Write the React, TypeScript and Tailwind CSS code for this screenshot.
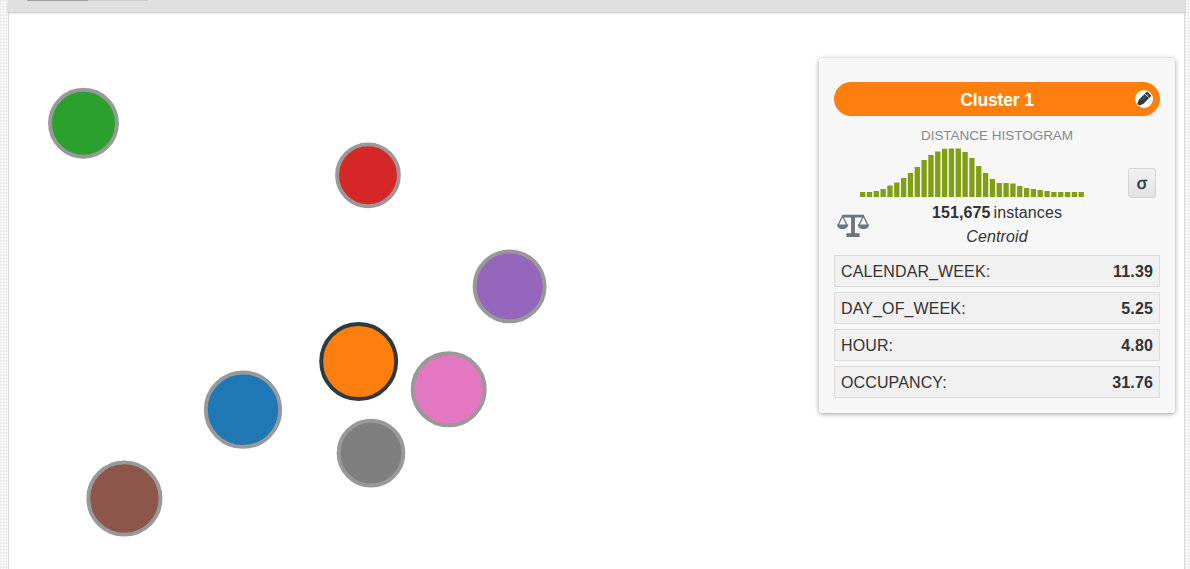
const clusters = [
  { cx: 83.5, cy: 123.3, r: 33.5, fill: "#2ca02c", stroke: "#999999" },
  { cx: 368, cy: 175.3, r: 30.9, fill: "#d62728", stroke: "#999999" },
  { cx: 509.6, cy: 286.4, r: 35, fill: "#9467bd", stroke: "#999999" },
  { cx: 358.7, cy: 361.5, r: 37.5, fill: "#ff7f0e", stroke: "#2c3a42" },
  { cx: 448.7, cy: 389.3, r: 36.1, fill: "#e377c2", stroke: "#999999" },
  { cx: 243, cy: 409.7, r: 37.2, fill: "#1f77b4", stroke: "#999999" },
  { cx: 371, cy: 453.1, r: 32.4, fill: "#7f7f7f", stroke: "#999999" },
  { cx: 124.4, cy: 498.5, r: 36.1, fill: "#8c564b", stroke: "#999999" },
];

const bars = [
  5, 5, 6, 8, 11.5, 14.5, 19, 24, 30, 37, 42, 45.5, 48.3, 48.5, 48.5, 45, 39, 31, 24, 18, 14, 14,
  13.5, 11, 9, 8, 7, 6, 5, 5, 5, 5, 5,
];

const fields = [
  ["CALENDAR_WEEK:", "11.39"],
  ["DAY_OF_WEEK:", "5.25"],
  ["HOUR:", "4.80"],
  ["OCCUPANCY:", "31.76"],
];

function ClusterMap() {
  return (
    <svg className="block h-[569px] w-[810px] shrink-0" viewBox="9 0 810 569">
      {clusters.map((c) => (
        <circle key={c.fill} cx={c.cx} cy={c.cy} r={c.r} fill={c.fill} stroke={c.stroke} strokeWidth="3.9" />
      ))}
    </svg>
  );
}

function Histogram() {
  return (
    <svg className="block h-[50px] w-[224px]" viewBox="0 0 224 50">
      {bars.map((h, i) => (
        <rect key={i} x={i * 6.83} y={50 - h} width="5.3" height={h} fill="#809f12" />
      ))}
    </svg>
  );
}

function Scale() {
  return (
    <svg className="block h-6 w-8" viewBox="0 0 32 24" fill="#68757b">
      <path d="M5 .8h22v2.600h-9.100v15.800h4.700V23H9.400v-3.800h4.700V3.400H5z" />
      <path d="M5.500 2 1 11.500M5.500 2 10.200 11.500M26.500 2l-4.700 9.500M26.500 2 31 11.500" fill="none" stroke="#68757b" strokeWidth="1.300" />
      <path d="M0 10.500h11.200c0 2.700-2 4.500-5.600 4.500S0 13.200 0 10.500zM20.800 10.500H32c0 2.700-2 4.500-5.600 4.500s-5.600-1.800-5.600-4.500z" />
    </svg>
  );
}

function Pencil() {
  return (
    <svg className="block size-[18px]" viewBox="0 0 18 18">
      <circle cx="9" cy="9" r="9" fill="#ffffff" />
      <g transform="translate(9.200 8.700) rotate(-45)" fill="#2c3a42">
        <path d="M-8.500 0-8.200-1.500-4.500-3.100H3.600V3.100H-4.500L-8.200 1.500z" />
        <path d="M4.100-3.100h2a1.200 1.200 0 0 1 1.200 1.200v3.800a1.200 1.200 0 0 1-1.200 1.200h-2z" />
        <path d="M-3.500-1h6" stroke="#74838a" strokeWidth=".6" />
        <circle cx="5.300" cy="0" r=".7" fill="#a5adb0" />
      </g>
    </svg>
  );
}

function ClusterCard() {
  return (
    <section className="mt-[58px] flex h-[355px] w-[356px] shrink-0 flex-col rounded-[3px] bg-[#f7f7f7] px-[15px] pt-6 shadow-[0_1px_5px_rgba(0,0,0,0.4)]">
      <div className="grid h-[34px] shrink-0 grid-cols-[26px_1fr_26px] items-center rounded-full bg-[#ff7f0e]">
        <h2 className="col-start-2 pt-px text-center text-[17.5px] leading-[34px] font-bold tracking-[-0.15px] text-white">Cluster 1</h2>
        <button aria-label="Edit" className="mb-[2px] ml-px size-[18px]"><Pencil /></button>
      </div>
      <div className="mt-[11px] text-center text-[13.5px] leading-[18px] tracking-[-0.02px] text-[#85888a]">DISTANCE HISTOGRAM</div>
      <div className="mt-[2px] flex h-[50px] items-start justify-between pr-1 pl-[26px]">
        <Histogram />
        <button className="mt-[21px] h-[30px] w-7 shrink-0 rounded-[3px] border border-[#d4d4d4] bg-linear-to-b from-[#f2f2f2] to-[#e2e2e2] pt-px text-[17px] leading-[27px] text-[#2c3a42] [-webkit-text-stroke:0.5px_#2c3a42]">σ</button>
      </div>
      <div className="mt-1 grid h-12 shrink-0 grid-cols-[38px_1fr_38px] text-[16px] leading-6 text-[#333333]">
        <div className="pt-[13px] pl-[3px]"><Scale /></div>
        <div className="text-center">
          <div><b className="tracking-[0.1px]">151,675</b><span className="pl-[3px] tracking-[0.1px]">instances</span></div>
          <div className="italic tracking-[0.1px]">Centroid</div>
        </div>
      </div>
      <dl className="mt-[6px] flex flex-col gap-[5px] text-[16px] text-[#333333]">
        {fields.map(([name, value]) => (
          <div key={name} className="flex h-8 items-center justify-between border border-[#dddddd] bg-[#f0f0f0] px-[6px] pt-[2px]">
            <dt className="tracking-[0.12px]">{name}</dt>
            <dd className="font-bold tracking-[0.15px]">{value}</dd>
          </div>
        ))}
      </dl>
    </section>
  );
}

export default function App() {
  return (
    <main className="relative flex h-[569px] w-[1190px] overflow-hidden bg-[#fdfdfd] bg-[linear-gradient(#ececec_1px,transparent_1px),linear-gradient(90deg,#ececec_1px,transparent_1px)] bg-size-[3px_3px] pl-2 font-['Liberation_Sans',Arial,sans-serif]">
      <div className="flex w-[1177px] shrink-0 border-x border-[#dadada] bg-white">
        <ClusterMap />
        <ClusterCard />
      </div>
      <header className="absolute top-0 left-2 flex h-3 w-[1177px] items-start bg-[#e0e0e0] pl-[19px] shadow-[0_1px_2px_rgba(0,0,0,0.25)]">
        <div className="h-px w-[61px] bg-[#a2a2a2]" />
        <div className="h-px w-[60px] bg-[#cecece]" />
      </header>
    </main>
  );
}
